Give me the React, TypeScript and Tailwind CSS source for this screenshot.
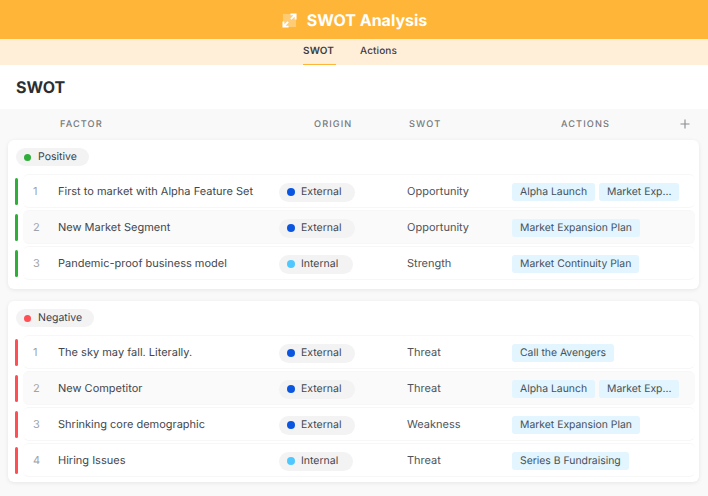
const font = { fontFamily: 'Inter, "Liberation Sans", sans-serif' };

type Row = { n: number; factor: string; origin: "External" | "Internal"; swot: string; actions: string[]; shaded?: boolean };

const positive: Row[] = [
  { n: 1, factor: "First to market with Alpha Feature Set", origin: "External", swot: "Opportunity", actions: ["Alpha Launch", "Market Exp..."] },
  { n: 2, factor: "New Market Segment", origin: "External", swot: "Opportunity", actions: ["Market Expansion Plan"], shaded: true },
  { n: 3, factor: "Pandemic-proof business model", origin: "Internal", swot: "Strength", actions: ["Market Continuity Plan"] },
];

const negative: Row[] = [
  { n: 1, factor: "The sky may fall. Literally.", origin: "External", swot: "Threat", actions: ["Call the Avengers"] },
  { n: 2, factor: "New Competitor", origin: "External", swot: "Threat", actions: ["Alpha Launch", "Market Exp..."], shaded: true },
  { n: 3, factor: "Shrinking core demographic", origin: "External", swot: "Weakness", actions: ["Market Expansion Plan"] },
  { n: 4, factor: "Hiring Issues", origin: "Internal", swot: "Threat", actions: ["Series B Fundraising"] },
];

function ExpandIcon() {
  return (
    <svg width="15" height="15" viewBox="0 0 16 16" fill="none" className="shrink-0">
      <rect x="1" y="1" width="14" height="14" fill="#ffffff" fillOpacity="0.3" />
      <path d="M9 1.5h5.5V7M14.5 1.5 9.5 6.5M7 14.5H1.5V9M1.5 14.5l5-5" stroke="#ffffff" strokeWidth="2" />
    </svg>
  );
}

function Section({ label, dot, pillWidth, bar, rows, bottom }: { label: string; dot: string; pillWidth: string; bar: string; rows: Row[]; bottom: string }) {
  return (
    <section className={`ml-2 mr-[9px] rounded-md bg-white pt-2 shadow-[0_1px_4px_rgba(0,0,0,0.08)] ${bottom}`}>
      <div className={`ml-2 flex h-[18px] items-center gap-[7px] rounded-full bg-[#f3f3f3] pl-2 text-[10.5px] text-[#3c4148] ${pillWidth}`}>
        <span className={`h-[7px] w-[7px] rounded-full ${dot}`} />
        {label}
      </div>
      <div className="mt-[7px] flex flex-col">
        {rows.map((r) => (
          <div key={r.n} className="flex h-9 items-center">
            <span className={`ml-[7px] h-[27px] w-[3px] shrink-0 rounded-full ${bar}`} />
            <div className={`ml-[5px] mr-1 flex h-[34px] flex-1 items-center rounded-md border-y border-[#f7f7f7] ${r.shaded ? "bg-[#fafafa]" : "bg-white"}`}>
              <span className="w-[35px] pl-[10px] text-[11px] text-[#a0a3a8]">{r.n}</span>
              <span className="w-[221px] text-[11px] text-[#43474d]">{r.factor}</span>
              <span className="mt-[2px] w-[128px]">
                <span className={`flex h-[19px] items-center gap-[6px] rounded-full bg-[#f3f3f3] pl-2 text-[10.5px] text-[#43474d] ${r.origin === "External" ? "w-[76px]" : "w-[74px]"}`}>
                  <span className={`h-2 w-2 rounded-full ${r.origin === "External" ? "bg-[#0b56e0]" : "bg-[#4fc8ff]"}`} />
                  {r.origin}
                </span>
              </span>
              <span className="w-[105px] text-[11px] text-[#4f5359]">{r.swot}</span>
              <span className="mt-[1px] flex gap-1">
                {r.actions.map((a) => (
                  <span key={a} className="flex h-[18px] items-center rounded-[3px] bg-[#e3f5fe] px-2 text-[10.4px] text-[#45515a]">{a}</span>
                ))}
              </span>
            </div>
          </div>
        ))}
      </div>
    </section>
  );
}

export default function App() {
  return (
    <div style={font} className="h-[496px] w-[708px] overflow-hidden bg-[#f9f9f9] antialiased [text-rendering:geometricPrecision]">
      <header className="flex h-[39px] items-center justify-center gap-[10px] bg-[#ffb638] pt-[1px] pl-[1px] text-[16px] font-bold text-white">
        <ExpandIcon />
        SWOT Analysis
      </header>
      <nav className="flex h-[26px] justify-center gap-6 bg-[#ffefd9] pr-[8px] text-[10px] tracking-[0.1px] text-[#3c3c3c]">
        <span className="flex h-full items-center border-b border-[#ffb638] pr-[2px] font-semibold">SWOT</span>
        <span className="flex h-full items-center pb-[1px] font-medium">Actions</span>
      </nav>
      <div className="flex h-11 items-center bg-white pl-4 text-[16px] font-bold text-[#2b2f33]">SWOT</div>
      <div className="flex h-[31px] items-center text-[9.2px] font-medium tracking-[1.1px] text-[#77797d]">
        <span className="w-[314px] pl-[60px]">FACTOR</span>
        <span className="w-[95px]">ORIGIN</span>
        <span className="w-[152px]">SWOT</span>
        <span className="w-[119px]">ACTIONS</span>
        <svg width="10" height="10" viewBox="0 0 10 10" fill="none" className="-mt-px">
          <path d="M5 .5v9M.5 5h9" stroke="#8a8c90" strokeWidth="1.1" />
        </svg>
      </div>
      <div className="flex flex-col gap-3">
        <Section label="Positive" dot="bg-[#2fae3a]" pillWidth="w-[73px]" bar="bg-[#2fae3a]" rows={positive} bottom="pb-2" />
        <Section label="Negative" dot="bg-[#ff4f55]" pillWidth="w-[78px]" bar="bg-[#ff4f55]" rows={negative} bottom="pb-1" />
      </div>
    </div>
  );
}
